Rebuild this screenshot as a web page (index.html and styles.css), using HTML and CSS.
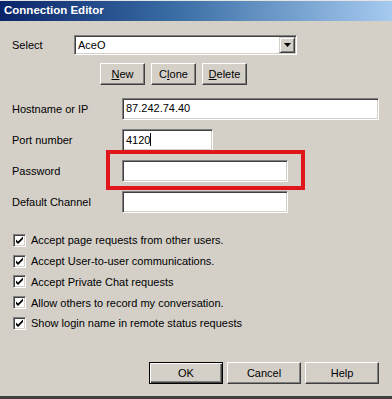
FILE: index.html
```html
<!DOCTYPE html>
<html lang="en">
<head>
  <meta charset="UTF-8" />
  <title>Connection Editor</title>
  <link rel="stylesheet" href="styles.css">
</head>
<body>
  <div class="window">
    <div class="title-bar">Connection Editor</div>

    <div class="content">
      <div class="select-row">
        <span class="label">Select</span>
        <div class="combo">
          <span class="combo-text">AceO</span>
          <span class="combo-btn">
            <svg width="7" height="4" viewBox="0 0 7 4"><path d="M0 0h7L3.5 4z" fill="#000"/></svg>
          </span>
        </div>
      </div>

      <div class="action-row">
        <button class="btn small"><u>N</u>ew</button>
        <button class="btn small">C<u>l</u>one</button>
        <button class="btn small"><u>D</u>elete</button>
      </div>

      <div class="fields">
        <span class="label">Hostname or IP</span>
        <div class="field wide">87.242.74.40</div>

        <span class="label">Port number</span>
        <div class="field short">4120<span class="caret"></span></div>

        <span class="label">Password</span>
        <div class="field medium highlighted"></div>

        <span class="label">Default Channel</span>
        <div class="field medium"></div>
      </div>

      <ul class="checks">
        <li><span class="checkbox"></span>Accept page requests from other users.</li>
        <li><span class="checkbox"></span>Accept User-to-user communications.</li>
        <li><span class="checkbox"></span>Accept Private Chat requests</li>
        <li><span class="checkbox"></span>Allow others to record my conversation.</li>
        <li><span class="checkbox"></span>Show login name in remote status requests</li>
      </ul>

      <div class="footer">
        <button class="btn wide-btn default">OK</button>
        <button class="btn wide-btn">Cancel</button>
        <button class="btn wide-btn">Help</button>
      </div>
    </div>
  </div>
</body>
</html>
```

FILE: styles.css
```css
*, *::before, *::after {
  margin: 0;
  padding: 0;
  box-sizing: border-box;
}
body {
  width: 392px;
  height: 399px;
  overflow: hidden;
  background: #d4d0c8;
  font-family: 'Liberation Sans', Arial, sans-serif;
  font-size: 11px;
  color: #000;
}
.window {
  height: 399px;
  display: flex;
  flex-direction: column;
  border-bottom: 3px solid #404040;
}
.title-bar {
  height: 21px;
  padding: 3px 0 0 4px;
  background: linear-gradient(to right, #0a246a 0%, #3a6ea5 45%, #a6caf0 100%);
  color: #fff;
  font-weight: bold;
  font-size: 11.5px;
  border-top: 1px solid #e4e4e4;
}
.content {
  flex: 1;
  display: flex;
  flex-direction: column;
  padding: 14px 0 0 12px;
}
.label {
  line-height: 20px;
}
.select-row {
  display: flex;
  align-items: center;
  height: 20px;
}
.select-row .label {
  width: 62px;
}
.combo {
  width: 223px;
  height: 20px;
  background: #fff;
  display: flex;
  align-items: center;
  border-top: 1px solid #808080;
  border-left: 1px solid #808080;
  border-right: 1px solid #fff;
  border-bottom: 1px solid #fff;
  box-shadow: inset 1px 1px 0 #404040, inset -1px -1px 0 #d4d0c8;
}
.combo-text {
  flex: 1;
  padding-left: 3px;
}
.combo-btn {
  width: 16px;
  height: 16px;
  margin-right: 1px;
  background: #d4d0c8;
  display: flex;
  align-items: center;
  justify-content: center;
  border-top: 1px solid #d4d0c8;
  border-left: 1px solid #d4d0c8;
  border-right: 1px solid #404040;
  border-bottom: 1px solid #404040;
  box-shadow: inset 1px 1px 0 #fff, inset -1px -1px 0 #808080;
}
.action-row {
  display: flex;
  gap: 6px;
  margin: 8px 0 0 88px;
}
.btn {
  height: 22px;
  background: #d4d0c8;
  font-family: inherit;
  font-size: 11px;
  color: #000;
  border-top: 1px solid #fff;
  border-left: 1px solid #fff;
  border-right: 1px solid #404040;
  border-bottom: 1px solid #404040;
  box-shadow: inset -1px -1px 0 #808080;
}
.btn.small {
  width: 45px;
}
.fields {
  display: grid;
  grid-template-columns: 110px auto;
  row-gap: 9px;
  margin-top: 13px;
  align-items: center;
  justify-items: start;
}
.field {
  height: 22px;
  background: #fff;
  padding: 3px 0 0 3px;
  border-top: 1px solid #808080;
  border-left: 1px solid #808080;
  border-right: 1px solid #fff;
  border-bottom: 1px solid #fff;
  box-shadow: inset 1px 1px 0 #404040, inset -1px -1px 0 #d4d0c8;
}
.field.wide {
  width: 257px;
}
.field.short {
  width: 91px;
}
.field.medium {
  width: 166px;
}
.caret {
  display: inline-block;
  width: 1px;
  height: 13px;
  background: #000;
  vertical-align: -2px;
}
.highlighted {
  position: relative;
}
.highlighted::after {
  content: "";
  position: absolute;
  left: -17px;
  top: -11px;
  width: 199px;
  height: 40px;
  border: 4px solid #e0161b;
}
.checks {
  list-style: none;
  margin-top: 17px;
  padding-left: 1px;
}
.checks li {
  height: 20.75px;
  display: flex;
  align-items: center;
}
.checkbox {
  width: 13px;
  height: 13px;
  margin-right: 5px;
  background: #fff url("data:image/svg+xml,%3Csvg xmlns='http://www.w3.org/2000/svg' width='13' height='13'%3E%3Cpath d='M2 4.5v2.5l2 2 5-5V1.5L4 6.5z' fill='%23000'/%3E%3C/svg%3E") no-repeat;
  border-top: 1px solid #808080;
  border-left: 1px solid #808080;
  border-right: 1px solid #fff;
  border-bottom: 1px solid #fff;
  box-shadow: inset 1px 1px 0 #404040, inset -1px -1px 0 #d4d0c8;
}
.footer {
  display: flex;
  justify-content: flex-end;
  gap: 4px;
  margin-top: auto;
  margin-bottom: 12px;
  padding-right: 13px;
}
.btn.wide-btn {
  width: 74px;
  height: 22px;
}
.btn.default {
  border: 1px solid #000;
  box-shadow: inset 1px 1px 0 #fff, inset -1px -1px 0 #404040, inset -2px -2px 0 #808080;
}
```
